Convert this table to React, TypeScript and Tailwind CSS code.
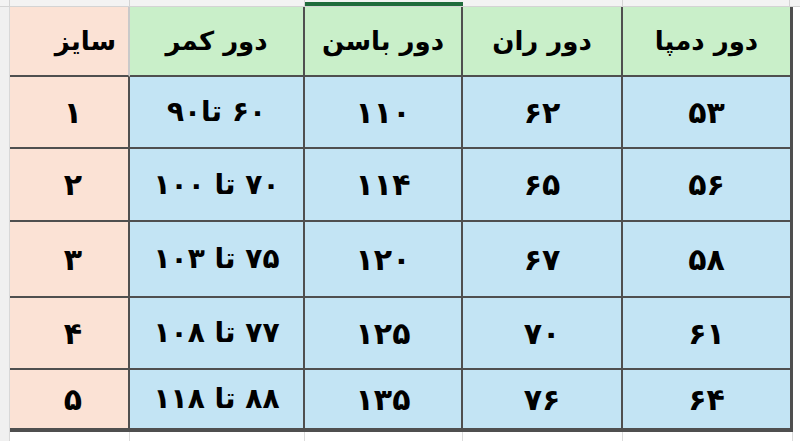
import React from "react";

type Row = { size: string; waist: string; hip: string; thigh: string; hem: string };

const rows: Row[] = [
  { size: "۱", waist: "۶۰ تا۹۰", hip: "۱۱۰", thigh: "۶۲", hem: "۵۳" },
  { size: "۲", waist: "۷۰ تا ۱۰۰", hip: "۱۱۴", thigh: "۶۵", hem: "۵۶" },
  { size: "۳", waist: "۷۵ تا ۱۰۳", hip: "۱۲۰", thigh: "۶۷", hem: "۵۸" },
  { size: "۴", waist: "۷۷ تا ۱۰۸", hip: "۱۲۵", thigh: "۷۰", hem: "۶۱" },
  { size: "۵", waist: "۸۸ تا ۱۱۸", hip: "۱۳۵", thigh: "۷۶", hem: "۶۴" },
];

const rowHeights = ["h-[72px]", "h-[73px]", "h-[76px]", "h-[72px]", "h-[62px]"];

export default function App() {
  return (
    <div className="w-[800px] h-[441px] overflow-hidden bg-white font-['DejaVu_Sans',sans-serif] font-bold text-black">
      {/* column header strip */}
      <div className="flex h-[7px] bg-[#f3f3f3] border-b border-[#d4d4d4]">
        <div className="w-[10px] border-r border-[#d4d4d4]" />
        <div className="w-[120px] border-r border-[#d4d4d4]" />
        <div className="w-[175px] border-r border-[#d4d4d4]" />
        <div className="w-[158px] pt-[2px]">
          <div className="h-full bg-[#1f6b3b]" />
        </div>
        <div className="w-[160px] border-r border-[#d4d4d4]" />
        <div className="w-[167px] border-r border-[#d4d4d4]" />
        <div className="flex-1" />
      </div>

      <div className="flex">
        <div className="w-[10px] bg-[#f0f0f0] border-r border-[#d8d8d8]" />
        <div className="grid grid-cols-[120px_175px_158px_160px_170px]">
          {/* header row */}
          <div dir="rtl" className="h-[70px] flex items-center px-3 bg-[#fbe2d5] border-r-2 border-r-[#c9c9c9] border-b-2 border-b-[#4f4f4f] text-[26px]">سایز</div>
          <div dir="rtl" className="h-[70px] flex items-center justify-center bg-[#c9efc9] border-r-2 border-b-2 border-[#4f4f4f] text-[26px]">دور کمر</div>
          <div dir="rtl" className="h-[70px] flex items-center justify-center bg-[#c9efc9] border-r-2 border-b-2 border-[#4f4f4f] text-[26px]">دور باسن</div>
          <div dir="rtl" className="h-[70px] flex items-center justify-center bg-[#c9efc9] border-r-2 border-b-2 border-[#4f4f4f] text-[26px]">دور ران</div>
          <div dir="rtl" className="h-[70px] flex items-center justify-center bg-[#c9efc9] border-r-[3px] border-b-2 border-[#4f4f4f] text-[26px]">دور دمپا</div>

          {rows.map((r, i) => {
            const h = rowHeights[i];
            const last = i === rows.length - 1;
            const b = last ? "border-b-4" : "border-b-2";
            return (
              <React.Fragment key={r.size}>
                <div dir="rtl" className={`${h} ${b} flex items-center justify-center pl-2 bg-[#fbe2d5] border-r-2 border-[#4f4f4f] text-[30px]`}>{r.size}</div>
                <div dir="rtl" className={`${h} ${b} flex items-center justify-center bg-[#c3e4f4] border-r-2 border-[#4f4f4f] text-[28px] tracking-[0.12em]`}>{r.waist}</div>
                <div dir="rtl" className={`${h} ${b} flex items-center justify-center bg-[#c3e4f4] border-r-2 border-[#4f4f4f] text-[30px] tracking-[0.15em]`}>{r.hip}</div>
                <div dir="rtl" className={`${h} ${b} flex items-center justify-center bg-[#c3e4f4] border-r-2 border-[#4f4f4f] text-[30px] tracking-[0.15em]`}>{r.thigh}</div>
                <div dir="rtl" className={`${h} ${b} flex items-center justify-center bg-[#c3e4f4] border-r-[3px] border-[#4f4f4f] text-[30px] tracking-[0.15em]`}>{r.hem}</div>
              </React.Fragment>
            );
          })}
        </div>
        <div className="flex-1 bg-white" />
      </div>

      {/* empty rows below */}
      <div className="flex h-[12px]">
        <div className="w-[10px] bg-[#f0f0f0] border-r border-[#d8d8d8]" />
        <div className="w-[120px] border-r border-[#dcdcdc]" />
        <div className="w-[175px] border-r border-[#dcdcdc]" />
        <div className="w-[158px] border-r border-[#dcdcdc]" />
        <div className="w-[160px] border-r border-[#dcdcdc]" />
        <div className="w-[170px] border-r border-[#dcdcdc]" />
      </div>
    </div>
  );
}
